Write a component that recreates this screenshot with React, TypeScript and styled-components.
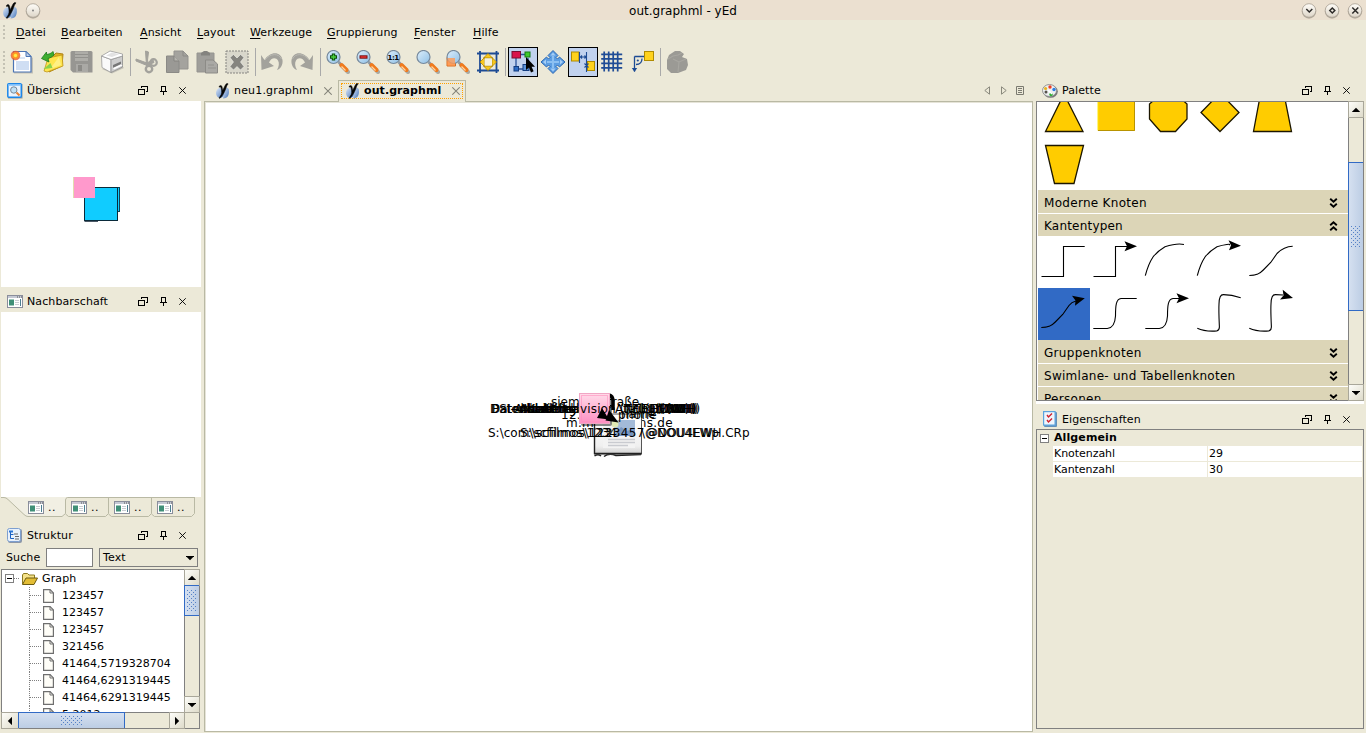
import React from "react";
import styled, { createGlobalStyle, css } from "styled-components";

const GlobalStyle = createGlobalStyle`
  html, body { margin: 0; padding: 0; overflow: hidden; }
  * { box-sizing: border-box; }
  svg { display: block; flex: none; }
`;

const c = {
  bg: "#ece9d8",
  title: "#ebe0d0",
  line: "#808080",
  soft: "#b9b9a4",
  section: "#dcd5b7",
  blue: "#316ac5",
  gold: "#ffcc00",
};

const Window = styled.div`
  width: 1366px;
  height: 733px;
  display: flex;
  flex-direction: column;
  background: ${c.bg};
  color: #000;
  font: 11px/14px "DejaVu Sans", sans-serif;
  letter-spacing: 0.12px;
  white-space: nowrap;
  overflow: hidden;
`;

/* ---------- title, menu, toolbar ---------- */

const TitleBar = styled.header`
  height: 20px;
  flex: none;
  display: grid;
  grid-template-columns: 1fr auto 1fr;
  align-items: center;
  background: ${c.title};
`;
const TitleSide = styled.div<{ $end?: boolean }>`
  display: flex;
  align-items: center;
  gap: ${(p) => (p.$end ? 7 : 6)}px;
  padding: 0 3px 0 2px;
  justify-content: ${(p) => (p.$end ? "flex-end" : "flex-start")};
`;
const TitleText = styled.div`
  font-size: 12px;
  letter-spacing: 0;
  line-height: 20px;
  padding-top: 1px;
`;
const MenuBar = styled.nav`
  height: 24px;
  flex: none;
  display: flex;
  align-items: center;
  padding-left: 3px;
`;
const Grip = styled.div<{ $h: number }>`
  width: 2px;
  height: ${(p) => p.$h}px;
  flex: none;
  background: repeating-linear-gradient(#c4c2b4 0 2px, transparent 2px 4px);
`;
const MenuItem = styled.div<{ $w: number }>`
  width: ${(p) => p.$w}px;
  flex: none;
  &::first-letter {
    text-decoration: underline;
    text-underline-offset: 2px;
  }
`;
const MenuItems = styled.div`
  display: flex;
  padding: 2px 0 0 11px;
`;
const ToolBar = styled.div`
  height: 36px;
  flex: none;
  display: flex;
  align-items: center;
  padding: 0 0 1px 3px;
`;
const ToolGroup = styled.div<{ $gap: number }>`
  display: flex;
  align-items: center;
  margin-left: ${(p) => p.$gap}px;
`;
const Tool = styled.span<{ $on?: boolean }>`
  width: 30px;
  height: 30px;
  display: flex;
  align-items: center;
  justify-content: center;
  flex: none;
  ${(p) =>
    p.$on &&
    css`
      background: #c1d2ee;
      box-shadow: inset 0 0 0 1px #000;
    `}
`;
const Separator = styled.i<{ $gap: number }>`
  width: 1px;
  height: 28px;
  margin-left: ${(p) => p.$gap}px;
  background: #a9a9a9;
  flex: none;
`;

/* ---------- frame ---------- */

const Body = styled.main`
  flex: 1;
  min-height: 0;
  display: flex;
`;
const LeftColumn = styled.aside`
  width: 204px;
  flex: none;
  display: flex;
  flex-direction: column;
`;
const RightColumn = styled.aside`
  width: 333px;
  flex: none;
  display: flex;
  flex-direction: column;
  padding: 0 2px 0 3px;
`;
const Center = styled.section`
  flex: 1;
  min-width: 0;
  display: flex;
  flex-direction: column;
`;
const Header = styled.div<{ $pl: number; $h?: number; $pt?: number; $end: number; $gap: number }>`
  height: ${(p) => p.$h ?? 21}px;
  flex: none;
  display: flex;
  align-items: center;
  gap: ${(p) => p.$gap}px;
  padding: ${(p) => p.$pt ?? 0}px ${(p) => p.$end}px 0 ${(p) => p.$pl}px;
`;
const HeaderText = styled.span<{ $ls?: number }>`
  flex: 1;
  padding-top: 1px;
  letter-spacing: ${(p) => p.$ls ?? 0.1}px;
`;
const HeaderButtons = styled.span`
  display: flex;
  align-items: center;
  gap: 12px;
`;

const WhitePane = styled.div<{ $h: number }>`
  width: 200px;
  height: ${(p) => p.$h}px;
  margin-left: 1px;
  background: #fff;
  flex: none;
`;

const ViewTabs = styled.div`
  height: 21px;
  margin-left: 1px;
  flex: none;
  display: flex;
  position: relative;
`;
const ViewTabsEdge = styled.svg`
  position: absolute;
  left: 0;
  top: 0;
`;
const ViewTab = styled.span<{ $w: number; $pl: number }>`
  position: relative;
  width: ${(p) => p.$w}px;
  padding: 0 0 0 ${(p) => p.$pl}px;
  display: flex;
  align-items: center;
  gap: 4px;
  letter-spacing: 0.5px;
`;

const SearchRow = styled.div`
  height: 21px;
  display: flex;
  align-items: center;
  padding-left: 6px;
  margin-top: 1px;
  flex: none;
`;
const SearchLabel = styled.span`
  width: 40px;
`;
const SearchInput = styled.input`
  width: 47px;
  height: 19px;
  border: 1px solid #7f7f7f;
  background: #fff;
  padding: 0;
`;
const Combo = styled.div`
  width: 99px;
  height: 19px;
  margin-left: 6px;
  border: 1px solid #7f7f7f;
  display: flex;
  align-items: center;
  justify-content: space-between;
  padding: 1px 3px 0 3px;
`;

const TreeBox = styled.div`
  width: 199px;
  height: 160px;
  margin: 1px 0 0 1px;
  border: 1px solid ${c.line};
  display: grid;
  grid-template: 142px 16px / 182px 15px;
  background: ${c.bg};
  flex: none;
`;
const Tree = styled.div`
  background: #fff;
  overflow: hidden;
`;
const TreeRow = styled.div<{ $root?: boolean }>`
  height: 17px;
  display: flex;
  align-items: center;
  gap: ${(p) => (p.$root ? 3 : 8)}px;
  padding-left: ${(p) => (p.$root ? 3 : 27)}px;
  letter-spacing: ${(p) => (p.$root ? 0.12 : 0.02)}px;
`;
const TreeToggle = styled.span`
  display: flex;
  align-items: center;
`;
const RootLabel = styled.span`
  padding-left: 1px;
`;

/* ---------- scroll bars ---------- */

const Bar = styled.div<{ $row?: boolean }>`
  display: flex;
  flex-direction: ${(p) => (p.$row ? "row" : "column")};
  background: #ece9d8;
  ${(p) => (p.$row ? "border-top: 1px solid #808080;" : "border-left: 1px solid #808080;")}
  min-width: 0;
  min-height: 0;
`;
const BarButton = styled.span<{ $s: number }>`
  flex: none;
  width: ${(p) => p.$s}px;
  height: 15px;
  display: flex;
  align-items: center;
  justify-content: center;
  background: linear-gradient(135deg, #fdfdf9, #dedbca);
  box-shadow: 0 0 0 1px #a9a79a;
`;
const Track = styled.span<{ $n?: number }>`
  flex: ${(p) => (p.$n === undefined ? "1" : `0 0 ${p.$n}px`)};
`;
const Thumb = styled.span<{ $n: number; $row?: boolean }>`
  flex: 0 0 ${(p) => p.$n}px;
  display: flex;
  align-items: center;
  justify-content: center;
  position: relative;
  border: 0 solid ${c.blue};
  border-width: ${(p) => (p.$row ? "0 1px" : "1px 0")};
  box-shadow: ${(p) => (p.$row ? "0 -1px 0 #316ac5" : "-1px 0 0 #316ac5")};
  background: linear-gradient(${(p) => (p.$row ? "180deg" : "90deg")}, #d5e0f0, #bccde4);
`;
const Texture = styled.span<{ $w: number; $h: number }>`
  width: ${(p) => p.$w}px;
  height: ${(p) => p.$h}px;
  background-image: radial-gradient(circle at 0.5px 0.5px, #5581c6 0.6px, transparent 0.8px),
    radial-gradient(circle at 2.5px 2.5px, #5581c6 0.6px, transparent 0.8px);
  background-size: 4px 4px;
`;

/* ---------- editor ---------- */

const EditorTabs = styled.div`
  height: 21px;
  flex: none;
  display: flex;
  align-items: flex-end;
`;
const EditorTab = styled.div<{ $active?: boolean }>`
  position: relative;
  z-index: 1;
  display: flex;
  align-items: center;
  gap: 3px;
  height: 21px;
  width: ${(p) => (p.$active ? 128 : 134)}px;
  padding: 1px 0 0 11px;
  ${(p) =>
    p.$active &&
    css`
      font-weight: bold;
      letter-spacing: 0.05px;
      height: 22px;
      margin-bottom: -1px;
      padding: 0 0 1px 3px;
      background: ${c.bg};
      border: 1px solid ${c.soft};
      border-bottom: 0;
    `}
`;
const FocusRing = styled.div`
  display: flex;
  align-items: center;
  gap: 3px;
  width: 122px;
  height: 16px;
  flex: none;
  margin-left: -1px;
  padding-left: 3px;
  border: 1px dotted #ffa000;
`;
const TabLabel = styled.span<{ $w: number; $ls?: number }>`
  width: ${(p) => p.$w}px;
  letter-spacing: ${(p) => p.$ls ?? 0.17}px;
`;
const TabNav = styled.div`
  margin-left: auto;
  display: flex;
  gap: 11px;
  align-items: center;
  height: 21px;
  padding-right: 9px;
  svg:last-child {
    margin-left: -2px;
  }
`;
const Canvas = styled.div`
  position: relative;
  flex: none;
  width: 829px;
  height: 631px;
  background: #fff;
  border: 1px solid ${c.soft};
  box-shadow: inset 1px 1px 0 #e6e4d8;
  overflow: hidden;
`;
const NodeLabel = styled.span<{ $x: number; $y: number; $ls?: number }>`
  position: absolute;
  left: ${(p) => p.$x - 205}px;
  top: ${(p) => p.$y - 110}px;
  font-size: 12px;
  line-height: 16px;
  letter-spacing: ${(p) => p.$ls ?? 0}px;
`;
const Layer = styled.svg<{ $x: number; $y: number }>`
  position: absolute;
  left: ${(p) => p.$x - 205}px;
  top: ${(p) => p.$y - 102}px;
`;

/* ---------- palette and properties ---------- */

const PaletteBox = styled.div`
  width: 328px;
  height: 300px;
  flex: none;
  display: grid;
  grid-template: 298px / 311px 15px;
  border: 1px solid ${c.line};
`;
const PaletteList = styled.div`
  display: flex;
  flex-direction: column;
  overflow: hidden;
  padding-left: 1px;
  background: #fff;
`;
const Cells = styled.div<{ $h: number }>`
  height: ${(p) => p.$h}px;
  flex: none;
  display: flex;
  flex-wrap: wrap;
  align-content: flex-end;
  padding-right: 40px;
  overflow: hidden;
  background: #fff;
`;
const Cell = styled.div<{ $on?: boolean }>`
  width: 52px;
  height: 52px;
  background: ${(p) => (p.$on ? c.blue : "transparent")};
`;
const Section = styled.div<{ $ls?: number; $h?: number; $open?: boolean }>`
  height: ${(p) => p.$h ?? 23}px;
  flex: none;
  display: flex;
  align-items: center;
  justify-content: space-between;
  padding: 2px 10px 0 6px;
  font-size: 12px;
  letter-spacing: ${(p) => p.$ls ?? 0.3}px;
  background: ${c.section};
  border-bottom: ${(p) => (p.$open ? "0" : "1px solid #fff")};
`;
const Gap = styled.div`
  height: 3px;
  background: #fff;
  flex: none;
`;
const PropBox = styled.div`
  width: 328px;
  height: 300px;
  border: 1px solid ${c.line};
  flex: none;
`;
const PropGroup = styled.div`
  height: 16px;
  display: flex;
  align-items: center;
  gap: 5px;
  padding-left: 3px;
  font-weight: bold;
  letter-spacing: 0.1px;
`;
const PropRow = styled.div`
  height: 16px;
  display: grid;
  grid-template-columns: 154px 1fr;
  gap: 1px;
  margin-left: 16px;
  margin-right: 1px;
  padding-bottom: 1px;
`;
const PropCell = styled.span`
  background: #fff;
  padding-left: 1px;
  line-height: 15px;
  letter-spacing: -0.05px;
`;

/* ---------- drawings ---------- */

const YLogo = ({ s = 16 }: { s?: number }) => (
  <svg width={s} height={s} viewBox="0 0 16 16">
    <defs>
      <linearGradient id="ylogo" x1="0" x2="1" y1="0" y2="1">
        <stop offset="0" stopColor="#dde8f8" />
        <stop offset="1" stopColor="#4272b8" />
      </linearGradient>
    </defs>
    <ellipse cx="5.200" cy="10" rx="4.200" ry="5" fill="url(#ylogo)" />
    <path d="M8 15.500c5 0 6.500-4 5.800-9c-.4-2-3-2.500-4-1z" fill="url(#ylogo)" />
    <path d="M4.200 3.200c2.200-2 3.300 0 3.300 4.500c1-2 2-4 3-6q1-1.500 2.500-1q-.2 1.200-1.200 2C10.500 7.500 8 12.500 5 15.300q-.8.2-1-.4C6 12.500 7 10.500 6.600 7.800C6.300 5 6 3.300 4.200 4.200z" fill="#050505" stroke="#050505" strokeWidth=".5" />
  </svg>
);

const Round = ({ kind }: { kind: "dot" | "down" | "max" | "close" }) => (
  <svg width="16" height="16" viewBox="0 0 16 16">
    <defs>
      <linearGradient id="round" x1="0" x2="0" y1="0" y2="1">
        <stop offset="0" stopColor="#fffdf8" />
        <stop offset="1" stopColor="#ddd5c8" />
      </linearGradient>
    </defs>
    <circle cx="8" cy="8.500" r="7.200" fill="#8c8578" opacity=".55" />
    <circle cx="8" cy="7.500" r="6.800" fill="url(#round)" stroke="#a8a093" strokeWidth=".8" />
    {kind === "dot" && <circle cx="8" cy="7.500" r=".9" fill="#777" />}
    <g fill="none" stroke="#2c2a28" strokeWidth="1.500" transform="translate(.3 0)">
      {kind === "down" && <path d="M5 6l3 3 3-3" />}
      {kind === "max" && <path d="M8 5l2.500 2.500L8 10 5.500 7.500z" />}
      {kind === "close" && <path d="M5 4.500l6 6M11 4.500l-6 6" />}
    </g>
  </svg>
);

const Svg24 = ({ children }: { children: React.ReactNode }) => (
  <svg width="24" height="24" viewBox="0 0 24 24">
    {children}
  </svg>
);

const G = "#a3a29c";
const NewIcon = () => (
  <Svg24>
    <path d="M4 3h13l6 5v15.500H4z" fill="#777" opacity=".35" />
    <path d="M3.500 1.500h12.500l5 5v15.500H3.500z" fill="#fff" stroke="#4b74b4" strokeWidth="1.200" />
    <path d="M6 11h13v9H6z" fill="#cfdef3" />
    <path d="M6 8h9" stroke="#dbe6f5" strokeWidth="2" />
    <path d="M16 1.500v5h5z" fill="#b9cdea" stroke="#4b74b4" />
    <circle cx="5.500" cy="5.500" r="4.800" fill="#ee5a2a" opacity=".8" />
    <circle cx="5.500" cy="5.500" r="3.200" fill="#ff9a1f" />
    <circle cx="5.500" cy="5.500" r="1.700" fill="#ffe94c" />
  </Svg24>
);
const OpenIcon = () => (
  <Svg24>
    <path d="M7 6l7-1 2-2 7 1-1 12-13 6z" fill="#e3b021" stroke="#b08415" />
    <path d="M4 21L8 8l14-3 1 11-16 6z" fill="#ffe54e" stroke="#bf951c" strokeWidth=".8" />
    <path d="M10 19l9-12 2 8z" fill="#fff59c" opacity=".7" />
    <path d="M1.500 8.500l5-6.500v2.500C11 4 13 1.500 13 1.500l1 3.500c-2 2-4 3-6 3.500L9 12z" fill="#3fae2f" stroke="#1b7a1c" strokeWidth=".8" />
    <path d="M3.500 19l7-6 2 5z" fill="#8bd34b" />
  </Svg24>
);
const SaveIcon = () => (
  <Svg24>
    <path d="M2 1h19q1.500 0 1.500 1.500V22.500H3l-2.500-2.500V2.500Q.5 1 2 1z" fill="#979692" />
    <path d="M5 1.500h13V11H5z" fill="#aeada8" />
    <path d="M5 4.500h13M5 7.500h13" stroke="#92918d" />
    <path d="M6 14h12v8H6z" fill="#aaa9a5" />
    <path d="M8 15h4v6H8z" fill="#8c8b87" />
  </Svg24>
);
const PrintIcon = () => (
  <Svg24>
    <path d="M2 19l10 4.500L24 18l-2-2z" fill="#777" opacity=".35" />
    <path d="M1.500 6L11 9.500V22.500L2 17.500z" fill="#fafafa" stroke="#9a9a9a" strokeWidth=".8" />
    <path d="M11 9.500L22.500 6v11L11 22.500z" fill="#cdcdcd" stroke="#8d8d8d" strokeWidth=".8" />
    <path d="M1.500 6L10 1l12.500 3v2L11 9.500z" fill="#fff" stroke="#9a9a9a" strokeWidth=".8" />
    <path d="M6 5.500l6-3 7 1.700-7 2.800z" fill="#e2e2e2" />
    <path d="M13 15l8-3.500v2.500L13 18z" fill="#777" />
    <path d="M13 18l8-3.500 1.500 1L14 19.500z" fill="#fff" />
  </Svg24>
);
const CutIcon = () => (
  <Svg24>
    <path d="M1 9l11 4 6-3 1 2.500-7 3L1 11zM10.500 1l3 1-1 8 1 6h-2z" fill={G} stroke={G} />
    <circle cx="18.500" cy="12.500" r="3.300" fill="none" stroke={G} strokeWidth="2.200" />
    <circle cx="14" cy="19" r="3.200" fill="none" stroke={G} strokeWidth="2.400" />
  </Svg24>
);
const CopyIcon = () => (
  <Svg24>
    <path d="M9 1h9l5 5v13H9z" fill="#a4a39e" stroke="#94938f" />
    <path d="M18 1v5h5" fill="none" stroke="#8c8b87" />
    <path d="M1.500 6H9l5 5v11.500H1.500z" fill="#9a9995" stroke="#8b8a86" />
    <path d="M9 6v5h5" fill="#b5b4ae" stroke="#858480" />
  </Svg24>
);
const PasteIcon = () => (
  <Svg24>
    <path d="M2 3h17v19H2z" fill="#9f9e9a" stroke="#959490" />
    <path d="M6 5.500V3l3-2h3l3 2v2.500z" fill="#84837f" />
    <path d="M10.500 10h7.500l4.500 4v9h-12z" fill="#aaa9a5" stroke="#8c8b87" />
    <path d="M13 15h6M13 18h8" stroke="#93928e" />
  </Svg24>
);
const DeleteIcon = () => (
  <Svg24>
    <rect x="1" y="1" width="22" height="22" fill="#d9d7cb" stroke="#858480" strokeDasharray="2 1" />
    <path d="M5 7.500l3.500-3L12 8l3.500-3.500 3.500 3L15.500 12l3.500 4.500-3.500 3.500L12 16.500 8.500 20 5 16.500 8.500 12z" fill="#85847f" stroke="#f4f3ee" strokeWidth=".6" />
  </Svg24>
);
const UndoIcon = ({ flip }: { flip?: boolean }) => (
  <Svg24>
    <g transform={flip ? "translate(24 0) scale(-1 1)" : undefined}>
      <path d="M1 5l3.500 5C10 1 21 1 22.500 10c.6 5-2 9-5.500 10 2-3 2.500-7 1-9.500-2-3.500-7-3-9 2L14 16 1.500 20z" fill={G} />
      <path d="M5 10C10 3 19 3 21.500 9" fill="none" stroke="#bab9b2" strokeWidth="1" />
    </g>
  </Svg24>
);
const Lens = ({ children, back }: { children?: React.ReactNode; back?: React.ReactNode }) => (
  <Svg24>
    <defs>
      <linearGradient id="lens" x1="0" x2="1" y1="0" y2="1">
        <stop offset="0" stopColor="#ddeefb" />
        <stop offset="1" stopColor="#8fc0e6" />
      </linearGradient>
    </defs>
    <path d="M15 15l7 7" stroke="#6e6e6e" strokeWidth="4" strokeLinecap="round" opacity=".5" />
    <path d="M12.500 12l3 3" stroke="#8e99a3" strokeWidth="3" />
    <path d="M15.500 15l5 5" stroke="#f07a1d" strokeWidth="4" strokeLinecap="round" />
    <path d="M15.500 16.500l4 4" stroke="#ffd3a0" strokeWidth="1.300" />
    {back}
    <circle cx="7.500" cy="7" r="6.500" fill="url(#lens)" stroke="#76899c" strokeWidth="1.200" />
    {children}
  </Svg24>
);
const LensText = styled.text`
  font: bold 7px "DejaVu Sans", sans-serif;
  letter-spacing: -0.4px;
`;
const FitIcon = () => (
  <Svg24>
    <path d="M1 3.500h22M1 20.500h22M4 1v22M20.500 1v22" stroke="#1d4b94" strokeWidth="1.800" />
    <path d="M12 3.500l4.500 4.500h-9zM12 20.500l4.500-4.500h-9zM4 12L8.500 7.500v9zM20.500 12L16 7.500v9z" fill="#f8c81c" stroke="#ad8400" strokeWidth=".8" />
    <rect x="8.500" y="8.500" width="7.500" height="7" fill="#f3f0dc" />
  </Svg24>
);
const EditModeIcon = () => (
  <Svg24>
    <path d="M5 7v12h9M8 4.500h8M17 8v8" fill="none" stroke="#29529c" strokeWidth="1.300" />
    <rect x="1" y="1.500" width="8.500" height="6.500" fill="#d9124a" stroke="#7a0d31" />
    <rect x="14" y="2" width="5" height="5" fill="#3ecb2c" stroke="#147a14" />
    <rect x="3" y="16.500" width="4.500" height="4.500" fill="#2c6bc4" stroke="#123c80" />
    <rect x="12" y="14.500" width="6" height="6" fill="#5b93da" stroke="#123c80" />
    <path d="M15 7v13l3-2.500 2 5 2.600-1.200-2-4.600h3.400z" fill="#000" />
  </Svg24>
);
const MoveIcon = () => (
  <Svg24>
    <path d="M12 .5l5 5-2 2 1.500 1.500 2-2L24 12l-5.500 5-2-2-1.500 1.500 2 2-5 5-5-5 2-2L7.500 15l-2 2L0 12l5.500-5 2 2L9 7.500l-2-2z" fill="#5c9de2" stroke="#1f5fae" strokeWidth=".9" />
    <path d="M12 2.500l2.500 3h-5zM12 21.500l2.500-3h-5zM2 12l3-2.500v5zM22 12l-3-2.500v5z" fill="#a5cef6" />
    <path d="M12 6v12M6 12h12" stroke="#8cc0f2" strokeWidth="2" />
  </Svg24>
);
const SnapIcon = () => (
  <Svg24>
    <rect x=".5" y="2" width="7.500" height="9" fill="#ffd21c" stroke="#b08b00" />
    <rect x="16.500" y="11.500" width="7" height="9" fill="#ffd21c" stroke="#b08b00" />
    <path d="M8.500 2v11M15.500 2v20M9 7h6.500M11 5.500L9.500 7 11 8.500M13.500 5.500L15 7l-1.500 1.500M13.500 13.500l4 4M17.500 13.500l-4 4" fill="none" stroke="#1d4b94" strokeWidth="1.100" />
  </Svg24>
);
const GridIcon = () => (
  <Svg24>
    <path d="M1.500 5h21M1.500 9.500h21M1.500 14h21M1.500 18.500h21M4.500 2v20M9 2v20M13.500 2v20M18 2v20" transform="translate(-1.300 -.6)" stroke="#1f4c96" strokeWidth="1.700" />
  </Svg24>
);
const OrthoIcon = () => (
  <Svg24>
    <rect x="13.500" y="1.500" width="9" height="9" fill="#ffd21c" stroke="#b08b00" />
    <path d="M3.500 6.500v15M3.500 6.500H13M5 14.500q6 0 6-6" fill="none" stroke="#1d4b94" strokeWidth="1.300" />
    <path d="M.8 18h5.400L3.500 22z" fill="#1d4b94" />
    <circle cx="6.800" cy="10.500" r="1.100" fill="#1d4b94" />
  </Svg24>
);
const BlobIcon = () => (
  <Svg24>
    <path d="M1 10l2-5 6-4h5l4 3-2 3 5 2 1 6-2 5-8 3H5l-4-4z" fill="#9b9a95" />
    <path d="M2 9l5-3 5-1 4-2M7 9l6 3 7-3M13 12l-1 10" fill="none" stroke="#a8a7a1" strokeWidth="1.100" />
  </Svg24>
);

const FloatIcon = () => (
  <svg width="10" height="9" viewBox="0 0 10 9" fill="none" stroke="#000" shapeRendering="crispEdges">
    <path d="M.5 3.500h6v5h-6zM3.500 2V.5h6v5H8" />
  </svg>
);
const PinIcon = () => (
  <svg width="7" height="9" viewBox="0 0 7 9" fill="none" stroke="#000" shapeRendering="crispEdges">
    <path d="M1.500 5V.5h4V5M0 5.500h7M3.500 6v3" />
  </svg>
);
const CrossIcon = ({ tab }: { tab?: boolean }) => (
  <svg width={tab ? 8 : 7} height={tab ? 8 : 7} viewBox="0 0 8 8" fill="none" stroke={tab ? "#85847a" : "#000"} strokeWidth="1.050">
    <path d="M.3.3l7.400 7.400M7.700.3L.3 7.700" />
  </svg>
);
const HeaderTools = () => (
  <HeaderButtons>
    <FloatIcon />
    <PinIcon />
    <CrossIcon />
  </HeaderButtons>
);

const OverviewIcon = () => (
  <svg width="16" height="16" viewBox="0 0 16 16">
    <path d="M1 1h14.500v14.500H1z" fill="#999" />
    <rect x=".8" y=".8" width="13.500" height="13.500" rx="1" fill="#eaf3fd" stroke="#1c86e8" strokeWidth="1.500" />
    <path d="M1 2h13" stroke="#7fc0fa" strokeWidth="1.500" />
    <circle cx="6.800" cy="7" r="3.200" fill="#bfe0f5" stroke="#7b8a98" />
    <path d="M9.500 9.500l3 3" stroke="#e58338" strokeWidth="2" />
  </svg>
);
const WindowIcon = () => (
  <svg width="16" height="13" viewBox="0 0 16 13">
    <rect x=".5" y=".5" width="15" height="12" fill="#fff" stroke="#8a8e9b" />
    <path d="M1 2h14" stroke="#c5c9d4" strokeWidth="2" />
    <path d="M10 2h1M12 2h1M14 2h1" stroke="#555" />
    <rect x="2" y="4.500" width="5" height="6" fill="#3f8f77" />
    <path d="M8 5.500h4M8 7.500h4M8 9.500h4" stroke="#c9ccd2" />
    <path d="M13.500 4v7" stroke="#4c7f91" />
  </svg>
);
const StructureIcon = () => (
  <svg width="15" height="15" viewBox="0 0 15 15">
    <rect x="1" y="1" width="14" height="14" rx="2" fill="#8b96a8" />
    <rect x=".5" y=".5" width="13" height="13" rx="2" fill="#e9f1fb" stroke="#7d9fd0" />
    <path d="M3.500 3v7.500H7M3.500 6.500h3" fill="none" stroke="#1f62c0" />
    <path d="M2 2.500h4v2H2z" fill="#2a74d4" />
    <path d="M7 6h4M8 8.500h4M8 11h4" stroke="#666" strokeWidth="1.200" />
  </svg>
);
const PaletteIcon = () => (
  <svg width="16" height="14" viewBox="0 0 16 14">
    <ellipse cx="8.500" cy="7.500" rx="7.300" ry="6.300" fill="#777" />
    <ellipse cx="7.500" cy="6.500" rx="7" ry="6" fill="#eef0f1" stroke="#8a8a8a" strokeWidth=".9" />
    <circle cx="8" cy="3" r="1.700" fill="#ee3c22" />
    <circle cx="12" cy="5.500" r="1.700" fill="#2d7de0" />
    <circle cx="9" cy="10.500" r="1.700" fill="#2fae35" />
    <circle cx="3.600" cy="4.500" r="1.600" fill="#e6b422" />
    <circle cx="4" cy="8" r="1.500" fill="#55504a" />
    <path d="M6 6l4 4" stroke="#fff" strokeWidth="1.500" />
  </svg>
);
const PropIcon = () => (
  <svg width="14" height="16" viewBox="0 0 14 16">
    <rect x="1" y="1" width="13" height="15" rx="1" fill="#6690b8" />
    <rect x=".6" y=".6" width="11.500" height="13.500" fill="#eff5fc" stroke="#5ba3de" strokeWidth="1.200" />
    <path d="M4 4l1.500 2L9 2.500M4 9l1.500 2L9 7.500" fill="none" stroke="#d0202c" strokeWidth="1.400" />
  </svg>
);
const ExpandBox = () => (
  <svg width="9" height="9" viewBox="0 0 9 9" shapeRendering="crispEdges">
    <path d="M.5.5h8v8h-8z" fill="#fff" stroke="#808080" />
    <path d="M2 4.500h5" stroke="#000" />
  </svg>
);
const FolderIcon = () => (
  <svg width="16" height="12" viewBox="0 0 16 12">
    <path d="M.5 11V2l1-1.500h4L7 2h5.500v3" fill="#f5e28a" stroke="#8c7a20" />
    <path d="M.5 11.500L4 5h11.500L12 11.500z" fill="#e3bd35" stroke="#6e5c10" />
  </svg>
);
const FileIcon = () => (
  <svg width="11" height="14" viewBox="0 0 11 14">
    <path d="M.6.600h6.500l3.300 3.300v9.500H.6z" fill="#fffef8" stroke="#6f6f6f" strokeWidth="1.200" />
    <path d="M7 .6v3.400h3.400" fill="none" stroke="#6f6f6f" />
  </svg>
);
const Branch = () => (
  <svg width="14" height="17" viewBox="0 0 14 17" shapeRendering="crispEdges">
    <path d="M.5 0v17M1 8.500h11" stroke="#808080" strokeDasharray="1 1" fill="none" />
  </svg>
);
const RootBranch = () => (
  <svg width="5" height="1" viewBox="0 0 5 1" shapeRendering="crispEdges">
    <path d="M0 .5h5" stroke="#808080" strokeDasharray="1 1" />
  </svg>
);
const Arrow = ({ dir }: { dir: 0 | 90 | 180 | 270 }) => (
  <svg width="8" height="8" viewBox="0 0 8 8">
    <path d="M4 1.800l4.200 4.200H-.2z" transform={`rotate(${dir} 4 4)`} />
  </svg>
);
const Chevrons = ({ up }: { up?: boolean }) => (
  <svg width="9" height="10" viewBox="0 0 9 10" fill="none" stroke="#000" strokeWidth="1.900">
    <path d="M1.200 .7l3.300 3 3.300-3M1.200 5.700l3.300 3 3.300-3" transform={up ? "rotate(180 4.500 5)" : undefined} />
  </svg>
);

const shapes = [
  "26,8 45,45.500 7.500,45.500",
  "",
  "19,8 34,8 45,18 45,33 33.500,45.500 18.500,45.500 7.500,33 7.500,18",
  "26,7 45,26.500 26,45.500 7,26.500",
  "14.500,8 38,8 45.500,45.500 7.500,45.500",
  "7.500,7.500 45.500,7.500 36,45.500 16.500,45.500",
];
const ShapeCell = ({ points }: { points: string }) => (
  <Cell>
    <svg width="52" height="52">
      {points ? (
        <polygon points={points} fill={c.gold} stroke="#1c1600" strokeWidth="1.300" />
      ) : (
        <>
          <rect x="8" y="8" width="37" height="37" fill={c.gold} />
          <path d="M8 8v36.500" stroke="#ffe600" />
          <path d="M8 44.500h36.500V8" fill="none" stroke="#b89300" />
        </>
      )}
    </svg>
  </Cell>
);

const stepPath = "M3.500 40.500H25.500V10.500";
const arcPath = "M3.300 39.700C5 33 7 27 11 21C15 16 19 13 23 10.700C30 8.500 38 7.500";
const sPath = "M3.300 39.500C11 39.500 14 37.500 17.300 34L24.700 26.500L31 17.500";
const roundStep = "M3.300 40.500H17.300C24 40 25.200 33 25.500 28C25.500 18 26 11 31 10.500";
const hook = "M3.300 40.300C9 43 16 43.500 22.700 43Q25.300 42.500 25.400 39C25 30 24.600 22 25 16C25.200 9 26.500 6.500 29.500 6.600";
const edges: { d: string; head?: string; on?: boolean }[] = [
  { d: `${stepPath}H46.700` },
  { d: `${stepPath}H38`, head: "47,10.300 34.500,5.300 37,10.300 34.500,15.300" },
  { d: `${arcPath} 42 8.500 46.700 9.700` },
  { d: `${arcPath} 35 9 38 9`, head: "47,9.700 34.500,4.300 37,9.300 35,14.300" },
  { d: `${sPath}C36 12.500 40 10.500 46.700 10.300` },
  { d: `${sPath}Q33.500 14 38 13`, head: "46.800,10.300 34,7.800 37.500,12.500 37,17.800", on: true },
  { d: `${roundStep}H46.700` },
  { d: `${roundStep}H38`, head: "47,10.300 34.500,5.300 37,10.300 34.500,15.300" },
  { d: `${hook}C36 6.700 40 7.500 46.700 9.700` },
  { d: `${hook}L37 7`, head: "47,9.900 36.700,1.800 37.500,7.500 34,11.500" },
];

const treeItems = ["123457", "123457", "123457", "321456", "41464,5719328704", "41464,6291319445", "41464,6291319445", "5.2012"];
const menu: [string, number][] = [
  ["Datei", 45], ["Bearbeiten", 79], ["Ansicht", 57], ["Layout", 53], ["Werkzeuge", 77], ["Gruppierung", 87], ["Fenster", 59], ["Hilfe", 40],
];

const ToolStrip = () => (
  <ToolBar>
    <Grip $h={22} />
    <ToolGroup $gap={2}>
      <Tool><NewIcon /></Tool>
      <Tool><OpenIcon /></Tool>
      <Tool><SaveIcon /></Tool>
      <Tool><PrintIcon /></Tool>
      <Separator $gap={3} />
    </ToolGroup>
    <ToolGroup $gap={1}>
      <Tool><CutIcon /></Tool>
      <Tool><CopyIcon /></Tool>
      <Tool><PasteIcon /></Tool>
      <Tool><DeleteIcon /></Tool>
      <Separator $gap={3} />
    </ToolGroup>
    <ToolGroup $gap={1}>
      <Tool><UndoIcon /></Tool>
      <Tool><UndoIcon flip /></Tool>
      <Separator $gap={3} />
    </ToolGroup>
    <ToolGroup $gap={2}>
      <Tool><Lens><path d="M7.500 3.500v7M4 7h7" stroke="#0b4d0b" strokeWidth="3.400" /><path d="M7.500 4.500v5M5 7h5" stroke="#49d03c" strokeWidth="1.400" /></Lens></Tool>
      <Tool><Lens><path d="M3.500 7h8" stroke="#7c0d0d" strokeWidth="3.400" /><path d="M4.500 7h6" stroke="#e03030" strokeWidth="1.600" /></Lens></Tool>
      <Tool><Lens><LensText x="1.500" y="9.500">1:1</LensText></Lens></Tool>
      <Tool><Lens /></Tool>
      <Tool><Lens back={<path d="M1 7.500h8.500v8.500H1z" fill="#ff9b52" stroke="#d96c1f" />}><path d="M1.500 8h7.500v7.500H1.500z" fill="#ff9a55" opacity=".8" /></Lens></Tool>
      <Tool><FitIcon /></Tool>
      <Separator $gap={2} />
    </ToolGroup>
    <ToolGroup $gap={2}>
      <Tool $on><EditModeIcon /></Tool>
      <Tool><MoveIcon /></Tool>
      <Tool $on><SnapIcon /></Tool>
      <Tool><GridIcon /></Tool>
      <Tool><OrthoIcon /></Tool>
      <Separator $gap={2} />
    </ToolGroup>
    <ToolGroup $gap={2}>
      <Tool><BlobIcon /></Tool>
    </ToolGroup>
  </ToolBar>
);

const pileLabels: [string, number][] = [
  ["Datenbank", 490], ["Datenblatt", 491], ["PSI-Arbeit", 492], ["nbanktitel", 513], ["Abteilung", 519],
  ["Abnahmen", 521], ["Kistenname", 527], ["tabellen", 532], ["Artikel", 541], ["Attribut(DWH)", 615], ["TEILE(DWH)", 624],
  ["-TEILE(WH)", 630], ["Nr(REV(WH)", 624], ["(DOKU)", 645], ["(DWH)", 655], ["(DWH)", 659],
];

const GraphDrawing = () => (
  <>
    <NodeLabel $x={551} $y={402}>siemensstraße</NodeLabel>
    <NodeLabel $x={561} $y={415} $ls={0.4}>1234</NodeLabel>
    <NodeLabel $x={566} $y={423} $ls={0.3}>m.muster@ns.de</NodeLabel>
    <Layer $x={590} $y={392} width="56" height="68" viewBox="0 0 56 68">
      <defs>
        <linearGradient id="paper" x1="0" x2="0" y1="0" y2="1">
          <stop offset="0" stopColor="#fff" />
          <stop offset=".8" stopColor="#f0f0f0" />
          <stop offset="1" stopColor="#cfcfcf" />
        </linearGradient>
      </defs>
      <path d="M4.500 64q3.500-2.500 6.500 0M14 64.500q5-4 12-1L51 62.500" fill="none" stroke="#222" strokeWidth="1.500" />
      <rect x="4.500" y="22" width="47" height="40" fill="url(#paper)" stroke="#555" />
      <path d="M4.500 20V61.500H51.500" fill="none" stroke="#222" strokeWidth="1.400" />
      <rect x="13" y="29" width="32" height="27" fill="#f3f3f3" />
      <rect x="24" y="28" width="21" height="16" fill="#a3bad8" />
      <path d="M24 44l7-9 6 4 8-3v8z" fill="#7796c2" />
      <path d="M18 47.500h27M18 50.500h27M18 53.500h20" stroke="#c9cbd0" strokeWidth="1.500" />
      <circle cx="25" cy="32" r="3.500" fill="#dfe9b4" />
    </Layer>
    <NodeLabel $x={618} $y={415} $ls={0.3}>phone</NodeLabel>
    <NodeLabel $x={621} $y={414}>name</NodeLabel>
    {pileLabels.map(([t, x], i) => (
      <NodeLabel key={i} $x={x} $y={409}>{t}</NodeLabel>
    ))}
    <Layer $x={575} $y={390} width="44" height="40" viewBox="0 0 44 40">
      <defs>
        <linearGradient id="pink" x1="0" x2="0" y1="0" y2="1">
          <stop offset="0" stopColor="#ffdbe9" />
          <stop offset="1" stopColor="#ff8fc2" />
        </linearGradient>
      </defs>
      <rect x="6" y="6" width="31" height="30" rx="2" fill="#000" opacity=".45" />
      <path d="M34 5q4 1 4 6v9" fill="none" stroke="#000" strokeWidth="3.500" />
      <rect x="4.500" y="3.500" width="30" height="30" fill="url(#pink)" stroke="#f0a6c4" />
      <rect x="6.500" y="5.500" width="26" height="26" fill="none" stroke="#ff8fbe" opacity=".6" />
    </Layer>
    <NodeLabel $x={580} $y={409} $ls={0.15}>vision (</NodeLabel>
    <NodeLabel $x={488} $y={433}>S:\com\scfilmos\1234</NodeLabel>
    <NodeLabel $x={520} $y={433}>S:\scfilmos\123</NodeLabel>
    <NodeLabel $x={597} $y={433} $ls={0.3}>123457</NodeLabel>
    <NodeLabel $x={641} $y={433}>\@NOU4EWp</NodeLabel>
    <NodeLabel $x={646} $y={433}>@DOU4EWH.CRp</NodeLabel>
    <Layer $x={592} $y={402} width="32" height="24" viewBox="0 0 32 24">
      <path d="M10 6l7 11.500-12-1.500zM17 8l9.500 12.500-13-2z" fill="#000" />
    </Layer>
  </>
);

export default function App() {
  return (
    <Window>
      <GlobalStyle />
      <TitleBar>
        <TitleSide>
          <YLogo s={17} />
          <Round kind="dot" />
        </TitleSide>
        <TitleText>out.graphml - yEd</TitleText>
        <TitleSide $end>
          <Round kind="down" />
          <Round kind="max" />
          <Round kind="close" />
        </TitleSide>
      </TitleBar>
      <MenuBar>
        <Grip $h={14} />
        <MenuItems>
          {menu.map(([label, w]) => (
            <MenuItem key={label} $w={w}>{label}</MenuItem>
          ))}
        </MenuItems>
      </MenuBar>
      <ToolStrip />
      <Body>
        <LeftColumn>
          <Header $pl={7} $end={18} $gap={4}>
            <OverviewIcon />
            <HeaderText>Übersicht</HeaderText>
            <HeaderTools />
          </Header>
          <WhitePane $h={186}>
            <svg width="200" height="186" viewBox="1 101 200 186">
              <path d="M84.500 221h13.500" stroke="#123" strokeWidth="1.500" />
              <rect x="110.500" y="187.500" width="9" height="24" fill="#10ccff" stroke="#07465c" />
              <rect x="84.500" y="187.500" width="33" height="33" fill="#10ccff" stroke="#0a2a3a" />
              <rect x="73" y="177" width="1" height="21" fill="#e2dcae" />
              <rect x="74" y="177" width="21" height="21" fill="#ff99cc" />
            </svg>
          </WhitePane>
          <Header $pl={7} $h={25} $pt={4} $end={18} $gap={4}>
            <WindowIcon />
            <HeaderText>Nachbarschaft</HeaderText>
            <HeaderTools />
          </Header>
          <WhitePane $h={185} />
          <ViewTabs>
            <ViewTabsEdge width="200" height="21" viewBox="0 0 200 21" fill="none" stroke={c.soft}>
              <path d="M5 0l20 19h37l3-3V0z" fill="#f1efe3" stroke="none" />
              <path d="M0 .5h3q2 0 4 2l16 15q2 2 4 2h34l3.500-3V3q0-2 2-2.500H194" />
              <path d="M64.500 17l3 2.500h37l3-3V1M107.500 17l3 2.500h37l3-3V1M150.500 17l3 2.500h37l3-3V1" />
            </ViewTabsEdge>
            <ViewTab $w={65} $pl={27}><WindowIcon />..</ViewTab>
            <ViewTab $w={43} $pl={5}><WindowIcon />..</ViewTab>
            <ViewTab $w={43} $pl={5}><WindowIcon />..</ViewTab>
            <ViewTab $w={43} $pl={5}><WindowIcon />..</ViewTab>
          </ViewTabs>
          <Header $pl={7} $h={28} $pt={6} $end={18} $gap={5}>
            <StructureIcon />
            <HeaderText>Struktur</HeaderText>
            <HeaderTools />
          </Header>
          <SearchRow>
            <SearchLabel>Suche</SearchLabel>
            <SearchInput />
            <Combo>
              Text
              <Arrow dir={180} />
            </Combo>
          </SearchRow>
          <TreeBox>
            <Tree>
              <TreeRow $root>
                <TreeToggle><ExpandBox /><RootBranch /></TreeToggle>
                <FolderIcon />
                <RootLabel>Graph</RootLabel>
              </TreeRow>
              {treeItems.map((t, i) => (
                <TreeRow key={i}>
                  <TreeToggle><Branch /><FileIcon /></TreeToggle>
                  {t}
                </TreeRow>
              ))}
            </Tree>
            <Bar>
              <BarButton $s={14}><Arrow dir={0} /></BarButton>
              <Thumb $n={31}><Texture $w={10} $h={22} /></Thumb>
              <Track />
              <BarButton $s={14}><Arrow dir={180} /></BarButton>
            </Bar>
            <Bar $row>
              <BarButton $s={16}><Arrow dir={270} /></BarButton>
              <Thumb $n={107} $row><Texture $w={22} $h={10} /></Thumb>
              <Track />
              <BarButton $s={14}><Arrow dir={90} /></BarButton>
            </Bar>
          </TreeBox>
        </LeftColumn>
        <Center>
          <EditorTabs>
            <EditorTab>
              <YLogo />
              <TabLabel $w={87}>neu1.graphml</TabLabel>
              <CrossIcon tab />
            </EditorTab>
            <EditorTab $active>
              <FocusRing>
                <YLogo />
                <TabLabel $w={85} $ls={0.08}>out.graphml</TabLabel>
                <CrossIcon tab />
              </FocusRing>
            </EditorTab>
            <TabNav>
              <svg width="6" height="9" viewBox="0 0 6 9" fill="none" stroke="#8a897d"><path d="M5.500.8v7.400L.8 4.500z" /></svg>
              <svg width="6" height="9" viewBox="0 0 6 9" fill="none" stroke="#8a897d"><path d="M.5.8v7.400l4.700-3.700z" /></svg>
              <svg width="8" height="9" viewBox="0 0 8 9" fill="none" stroke="#7b7a70"><path d="M.5.500h7v8h-7zM2 2.500h4M2 4.500h4M2 6.500h4" /></svg>
            </TabNav>
          </EditorTabs>
          <Canvas>
            <GraphDrawing />
          </Canvas>
        </Center>
        <RightColumn>
          <Header $pl={6} $end={14} $gap={4}>
            <PaletteIcon />
            <HeaderText>Palette</HeaderText>
            <HeaderTools />
          </Header>
          <PaletteBox>
            <PaletteList>
              <Cells $h={88}>
                {shapes.map((p, i) => <ShapeCell key={i} points={p} />)}
              </Cells>
              <Section $h={24}>Moderne Knoten<Chevrons /></Section>
              <Section $h={22} $ls={0.2} $open>Kantentypen<Chevrons up /></Section>
              <Cells $h={104}>
                {edges.map((e, i) => (
                  <Cell key={i} $on={e.on}>
                    <svg width="52" height="52">
                      <path d={e.d} fill="none" stroke="#000" strokeWidth="1.100" />
                      {e.head && <polygon points={e.head} />}
                    </svg>
                  </Cell>
                ))}
              </Cells>
              <Section $h={24}>Gruppenknoten<Chevrons /></Section>
              <Section $ls={0.27}>Swimlane- und Tabellenknoten<Chevrons /></Section>
              <Section>Personen<Chevrons /></Section>
            </PaletteList>
            <Bar>
              <BarButton $s={14}><Arrow dir={0} /></BarButton>
              <Track $n={45} />
              <Thumb $n={149}><Texture $w={10} $h={22} /></Thumb>
              <Track />
              <BarButton $s={14}><Arrow dir={180} /></BarButton>
            </Bar>
          </PaletteBox>
          <Gap />
          <Header $pl={7} $h={25} $pt={5} $end={14} $gap={5}>
            <PropIcon />
            <HeaderText $ls={0.06}>Eigenschaften</HeaderText>
            <HeaderTools />
          </Header>
          <PropBox>
            <PropGroup><ExpandBox />Allgemein</PropGroup>
            <PropRow><PropCell>Knotenzahl</PropCell><PropCell>29</PropCell></PropRow>
            <PropRow><PropCell>Kantenzahl</PropCell><PropCell>30</PropCell></PropRow>
          </PropBox>
        </RightColumn>
      </Body>
    </Window>
  );
}
